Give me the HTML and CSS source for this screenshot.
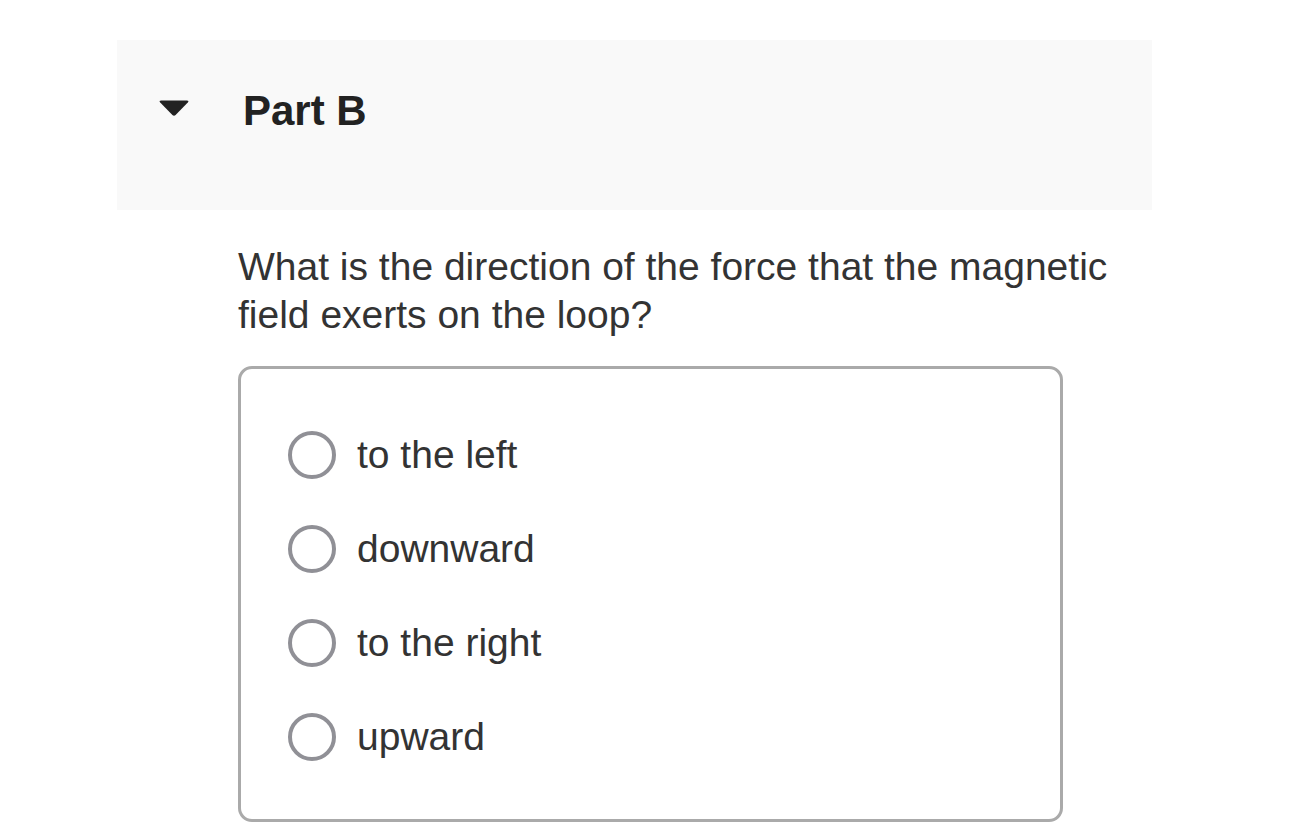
FILE: index.html
```html
<!DOCTYPE html>
<html>
<head>
<meta charset="utf-8">
<link rel="stylesheet" href="styles.css">
</head>
<body>
<div class="page">
  <div class="part-header">
    <svg class="caret" width="32" height="18" viewBox="0 0 32 18">
      <path d="M3 1.5 H29 Q31.5 1.5 29.8 3.4 L17.6 16 Q16 17.6 14.4 16 L2.2 3.4 Q0.5 1.5 3 1.5 Z" fill="#222"/>
    </svg>
    <h2 class="part-title">Part B</h2>
  </div>
  <div class="part-body">
    <p class="question">What is the direction of the force that the magnetic field exerts on the loop?</p>
    <div class="choices">
      <label class="choice"><span class="radio"></span><span class="choice-text">to the left</span></label>
      <label class="choice"><span class="radio"></span><span class="choice-text">downward</span></label>
      <label class="choice"><span class="radio"></span><span class="choice-text">to the right</span></label>
      <label class="choice"><span class="radio"></span><span class="choice-text">upward</span></label>
    </div>
  </div>
</div>
</body>
</html>
```
FILE: styles.css
```css
html, body {
  margin: 0;
  padding: 0;
  background: #ffffff;
}
body {
  font-family: "Liberation Sans", Arial, Helvetica, sans-serif;
  color: #333333;
}
.page {
  padding-top: 40px;
  padding-left: 117px;
}
.part-header {
  width: 1035px;
  height: 170px;
  background: #f9f9f9;
  display: flex;
  align-items: flex-start;
  box-sizing: border-box;
  padding-left: 41px;
}
.caret {
  margin-top: 59px;
  flex: none;
}
.part-title {
  margin: 45px 0 0 53px;
  font-size: 42px;
  font-weight: bold;
  line-height: 52px;
  color: #222222;
}
.part-body {
  padding-left: 121px;
}
.question {
  margin: 33px 0 0 0;
  width: 900px;
  font-size: 39px;
  line-height: 48px;
  color: #333333;
}
.choices {
  margin-top: 27px;
  width: 825px;
  box-sizing: border-box;
  border: 3px solid #aaaaaa;
  border-radius: 14px;
  padding: 39px 0 35px 47px;
  display: flex;
  flex-direction: column;
}
.choice {
  display: flex;
  align-items: center;
  height: 94px;
}
.radio {
  width: 48px;
  height: 48px;
  box-sizing: border-box;
  border: 4px solid #909096;
  border-radius: 50%;
  flex: none;
}
.choice-text {
  margin-left: 21px;
  font-size: 39px;
  color: #333333;
}
```
